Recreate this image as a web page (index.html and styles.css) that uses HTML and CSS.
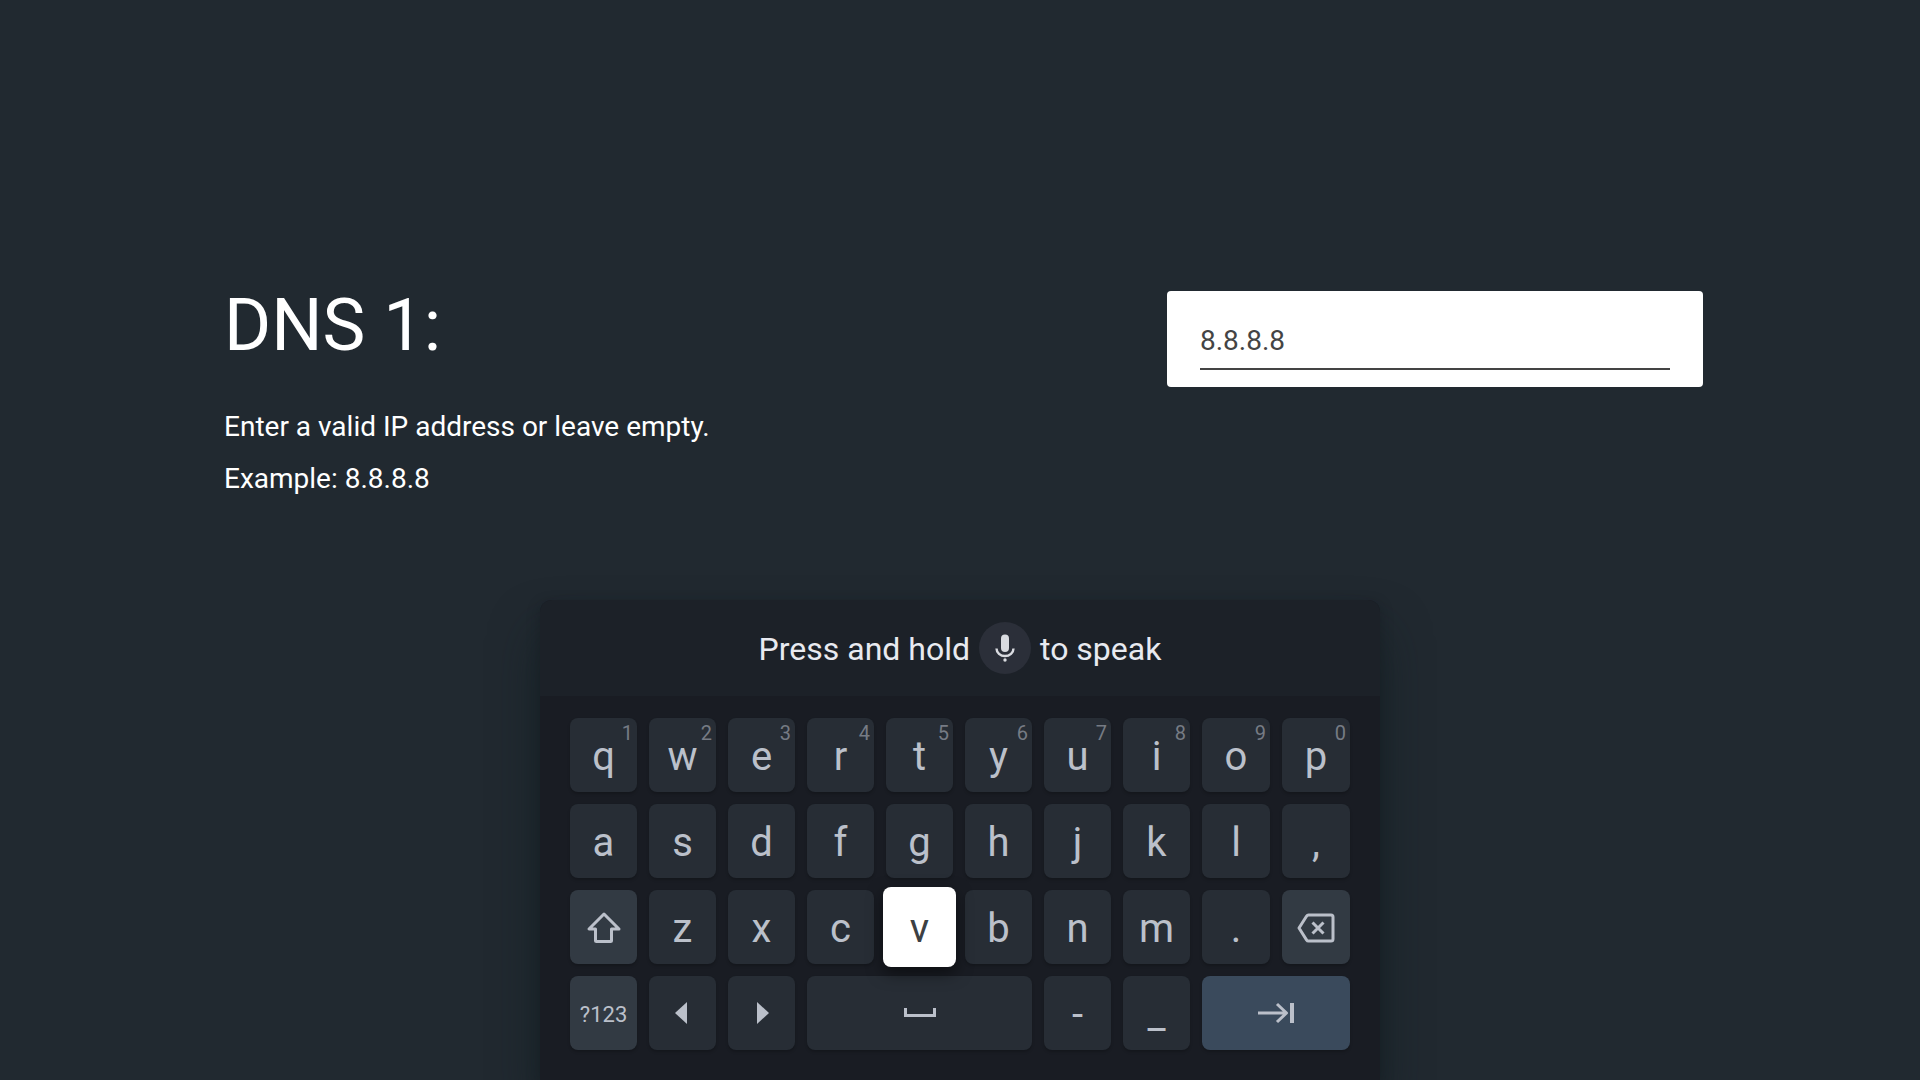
FILE: index.html
```html
<!DOCTYPE html>
<html lang="en">
<head>
    <meta charset="UTF-8" />
    <meta name="viewport" content="width=device-width, initial-scale=1.0"/>
    <title>DNS 1</title>
    <link rel="stylesheet" href="styles.css">
</head>
<body>
<main class="step">
    <div class="guidance">
        <h1><label for="dns1">DNS 1:</label></h1>
        <p>Enter a valid IP address or leave empty.</p>
        <p>Example: 8.8.8.8</p>
    </div>
    <div class="action-box">
        <input type="text" id="dns1" class="dns-input" value="8.8.8.8" autocomplete="off" spellcheck="false">
    </div>
</main>

<!-- On-screen keyboard -->
<section class="keyboard" aria-label="Keyboard">
    <div class="voice-bar">
        <span>Press and hold</span>
        <button type="button" class="mic-btn" aria-label="Microphone">
            <svg width="52" height="52" viewBox="0 0 52 52">
                <rect x="22" y="12.500" width="8" height="17.500" rx="4" fill="#d9dbe0"/>
                <path d="M17.500 26.500a8.500 7.500 0 0 0 17 0" fill="none" stroke="#d9dbe0" stroke-width="2.400"/>
                <circle cx="26" cy="38" r="1.700" fill="#d9dbe0"/>
            </svg>
        </button>
        <span>to speak</span>
    </div>

    <div class="keys">
        <button type="button" class="key">q<span class="hint">1</span></button>
        <button type="button" class="key">w<span class="hint">2</span></button>
        <button type="button" class="key">e<span class="hint">3</span></button>
        <button type="button" class="key">r<span class="hint">4</span></button>
        <button type="button" class="key">t<span class="hint">5</span></button>
        <button type="button" class="key">y<span class="hint">6</span></button>
        <button type="button" class="key">u<span class="hint">7</span></button>
        <button type="button" class="key">i<span class="hint">8</span></button>
        <button type="button" class="key">o<span class="hint">9</span></button>
        <button type="button" class="key">p<span class="hint">0</span></button>

        <button type="button" class="key">a</button>
        <button type="button" class="key">s</button>
        <button type="button" class="key">d</button>
        <button type="button" class="key">f</button>
        <button type="button" class="key">g</button>
        <button type="button" class="key">h</button>
        <button type="button" class="key">j</button>
        <button type="button" class="key">k</button>
        <button type="button" class="key">l</button>
        <button type="button" class="key">,</button>

        <button type="button" class="key icon fn" aria-label="Shift">
            <svg width="36" height="36" viewBox="0 0 36 36">
                <path d="M18 5L3 20h6.500v11.500q0 1 1 1h14q1 0 1-1V20H33z"/>
            </svg>
        </button>
        <button type="button" class="key">z</button>
        <button type="button" class="key">x</button>
        <button type="button" class="key">c</button>
        <button type="button" class="key focused">v</button>
        <button type="button" class="key">b</button>
        <button type="button" class="key">n</button>
        <button type="button" class="key">m</button>
        <button type="button" class="key">.</button>
        <button type="button" class="key icon fn" aria-label="Backspace">
            <svg width="38" height="32" viewBox="0 0 38 32">
                <path d="M11.500 4H34q2 0 2 2v22q0 2-2 2H11.500q-1.200 0-2-1.200L2 17l7.500-11.800q.8-1.200 2-1.200z"/>
                <path d="M15.500 11.500l11 11M26.500 11.500l-11 11"/>
            </svg>
        </button>

        <button type="button" class="key fn symbols">?123</button>
        <button type="button" class="key icon" aria-label="Move left">
            <svg width="16" height="22" viewBox="0 0 16 22"><path class="solid" d="M12 0v22L0 11z"/></svg>
        </button>
        <button type="button" class="key icon" aria-label="Move right">
            <svg width="14" height="22" viewBox="0 0 14 22"><path class="solid" d="M2 0v22l12-11z"/></svg>
        </button>
        <button type="button" class="key icon space" aria-label="Space">
            <svg width="32" height="10" viewBox="0 0 32 10"><path class="solid" d="M0 0h3v6h26V0h3v9H0z"/></svg>
        </button>
        <button type="button" class="key">-</button>
        <button type="button" class="key">_</button>
        <button type="button" class="key icon enter" aria-label="Next">
            <svg width="36" height="22" viewBox="0 0 36 22">
                <path d="M0 11h28M19 2l9.500 9L19 20"/>
                <path class="solid" d="M32 1h4v20h-4z"/>
            </svg>
        </button>
    </div>
</section>
</body>
</html>
```
FILE: styles.css
```css
* {
    box-sizing: border-box;
}

body {
    font-family: Roboto, "Liberation Sans", sans-serif;
    background: #212930;
    color: #ffffff;
    margin: 0;
    min-height: 100vh;
    display: flex;
    flex-direction: column;
    overflow-x: hidden;
}

.step {
    display: flex;
    justify-content: space-between;
    align-items: flex-start;
    gap: 40px;
    padding: 284px 217px 48px 224px;
}

.guidance h1 {
    margin: 0 0 33px;
    font-size: 72px;
    line-height: 84px;
    font-weight: 400;
}

.guidance p {
    margin: 0;
    font-size: 28px;
    line-height: 52px;
}

.action-box {
    width: 100%;
    max-width: 536px;
    margin-top: 7px;
    padding: 31px 33px 17px;
    background: #ffffff;
    border-radius: 4px;
}

.dns-input {
    display: block;
    width: 100%;
    padding: 0 0 10px;
    border: 0;
    border-bottom: 2px solid #444444;
    background: transparent;
    color: #444444;
    font-family: inherit;
    font-size: 28px;
    line-height: 36px;
    height: 48px;
    outline: none;
}

.keyboard {
    width: 100%;
    max-width: 840px;
    margin: auto auto 0;
    background: #191c23;
    border-radius: 12px 12px 0 0;
    box-shadow: 0 32px 48px rgba(16, 30, 34, 0.6), 0 4px 12px rgba(20, 26, 32, 0.5);
}

.voice-bar {
    display: flex;
    align-items: center;
    justify-content: center;
    gap: 9px;
    height: 96px;
    background: #1c2128;
    border-radius: 12px 12px 0 0;
    color: #e8eaf0;
    font-size: 32px;
    line-height: 40px;
}

.voice-bar span {
    padding-top: 2px;
}

.mic-btn {
    width: 52px;
    height: 52px;
    padding: 0;
    border: none;
    border-radius: 50%;
    background: #2b2f39;
}

.mic-btn svg {
    display: block;
}

.keys {
    display: grid;
    grid-template-columns: repeat(8, 67fr) repeat(2, 68fr);
    grid-auto-rows: 74px;
    gap: 12px;
    padding: 22px 30px 30px;
}

.key {
    position: relative;
    display: flex;
    align-items: center;
    justify-content: center;
    min-width: 0;
    padding: 4px 0 0;
    border: none;
    border-radius: 8px;
    background: #272d35;
    color: #bbc0ca;
    font-family: inherit;
    font-size: 40px;
    line-height: 48px;
    box-shadow: 0 2px 3px rgba(0, 0, 0, 0.2);
}

.hint {
    position: absolute;
    top: 3px;
    right: 4px;
    color: #767b84;
    font-size: 20px;
    line-height: 24px;
}

.icon {
    padding: 0;
}

.icon svg {
    fill: none;
    stroke: #bbc0ca;
    stroke-width: 3;
    stroke-linejoin: round;
}

.icon svg .solid {
    fill: #bbc0ca;
    stroke: none;
}

.fn {
    background: #323a43;
}

.symbols {
    font-size: 22px;
}

.space {
    grid-column: span 3;
}

.enter {
    grid-column: span 2;
    background: #3a4a5c;
}

/* Key under the remote cursor */
.focused {
    z-index: 1;
    margin: -3px;
    background: #ffffff;
    color: #3c4043;
    box-shadow: 0 6px 16px rgba(0, 0, 0, 0.5);
}
```
